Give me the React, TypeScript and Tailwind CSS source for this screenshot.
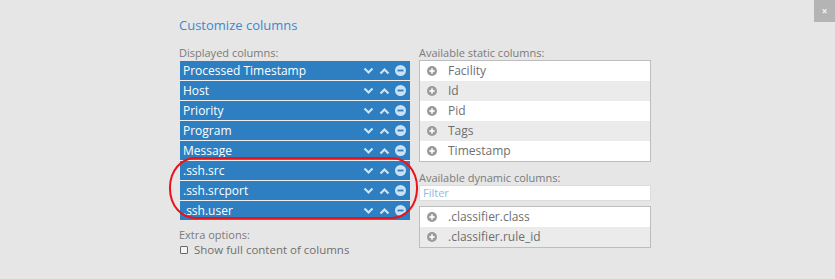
import React from "react";

const displayed = [
  "Processed Timestamp",
  "Host",
  "Priority",
  "Program",
  "Message",
  ".ssh.src",
  ".ssh.srcport",
  ".ssh.user",
];
const staticCols = ["Facility", "Id", "Pid", "Tags", "Timestamp"];
const dynamicCols = [".classifier.class", ".classifier.rule_id"];

function Down() {
  return (
    <svg width="11" height="8" viewBox="0 0 11 8">
      <path d="M1.5 1.5 L5.5 5.5 L9.5 1.5" stroke="#cde2f4" strokeWidth="2.2" fill="none" />
    </svg>
  );
}
function Up() {
  return (
    <svg width="11" height="8" viewBox="0 0 11 8">
      <path d="M1.5 6.5 L5.5 2.5 L9.5 6.5" stroke="#cde2f4" strokeWidth="2.2" fill="none" />
    </svg>
  );
}
function Minus() {
  return (
    <svg width="11" height="11" viewBox="0 0 11 11">
      <circle cx="5.5" cy="5.5" r="5.5" fill="#cde2f4" />
      <rect x="2.5" y="4.6" width="6" height="1.8" fill="#2d7fc1" />
    </svg>
  );
}
function Plus() {
  return (
    <svg width="10" height="10" viewBox="0 0 10 10">
      <circle cx="5" cy="5" r="5" fill="#9a9a9a" />
      <rect x="2.3" y="4.2" width="5.4" height="1.6" fill="#fff" />
      <rect x="4.2" y="2.3" width="1.6" height="5.4" fill="#fff" />
    </svg>
  );
}

export default function App() {
  return (
    <div
      className="relative w-[835px] h-[279px] bg-[#e6e6e6] overflow-hidden"
      style={{ fontFamily: "'Open Sans', 'DejaVu Sans', sans-serif" }}
    >
      <div className="absolute right-0 top-0 w-[21px] h-[22px] bg-[#b4b4b4] flex items-center justify-center text-[#eef3f8] text-[10px] font-bold leading-none">
        ×
      </div>
      <div className="pl-[179px] pt-[15px]">
        <div className="text-[13px] text-[#3a89cf] leading-[20px]">Customize columns</div>
        <div className="flex mt-[11px] gap-[9px]">
          <div className="w-[231px]">
            <div className="text-[11px] text-[#7a7a7a] leading-[14px]">Displayed columns:</div>
            <div className="ml-[1px] mt-[1px] flex flex-col gap-[1px] bg-[#f0f0f0]">
              {displayed.map((d) => (
                <div
                  key={d}
                  className="h-[19px] bg-[#2d7fc1] flex items-center pl-[3px] pr-[4px] text-white text-[12px]"
                >
                  <span className="flex-1 leading-none">{d}</span>
                  <div className="flex items-center gap-[5px]">
                    <Down />
                    <Up />
                    <Minus />
                  </div>
                </div>
              ))}
            </div>
            <div className="text-[11px] text-[#7a7a7a] leading-[14px] mt-[8px]">Extra options:</div>
            <div className="flex items-center gap-[6px] mt-[1px] ml-[1px]">
              <div className="w-[8px] h-[8px] border border-[#666] rounded-[1px] bg-[#f4f4f4]" />
              <span className="text-[11.5px] text-[#707070] leading-[14px]">Show full content of columns</span>
            </div>
          </div>
          <div className="w-[232px]">
            <div className="text-[11px] text-[#7a7a7a] leading-[14px]">Available static columns:</div>
            <div className="border border-[#bdbdbd] bg-white">
              {staticCols.map((c, i) => (
                <div
                  key={c}
                  className={`h-[20px] flex items-center pl-[7px] gap-[11px] text-[12px] text-[#6f6f6f] ${i % 2 === 1 ? "bg-[#ebebeb]" : "bg-white"}`}
                >
                  <Plus />
                  <span>{c}</span>
                </div>
              ))}
            </div>
            <div className="text-[11px] text-[#7a7a7a] leading-[14px] mt-[9px]">Available dynamic columns:</div>
            <div className="h-[16px] border border-[#dcdcdc] bg-white text-[11px] text-[#8cbbe6] pl-[3px] leading-[14px]">
              Filter
            </div>
            <div className="border border-[#bdbdbd] bg-white mt-[5px]">
              {dynamicCols.map((c, i) => (
                <div
                  key={c}
                  className={`h-[20px] flex items-center pl-[7px] gap-[11px] text-[12px] text-[#6f6f6f] ${i % 2 === 1 ? "bg-[#ebebeb]" : "bg-white"}`}
                >
                  <Plus />
                  <span>{c}</span>
                </div>
              ))}
            </div>
          </div>
        </div>
      </div>
      <div className="absolute left-[169px] top-[157px] w-[249px] h-[62px] border-[2.5px] border-[#e8131b] rounded-[26px/30px]" />
    </div>
  );
}
